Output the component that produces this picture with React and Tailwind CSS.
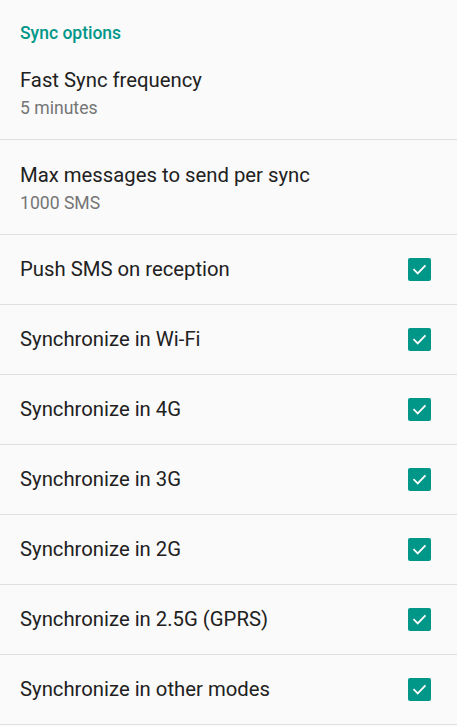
import React from 'react';

const toggles = [
  'Push SMS on reception',
  'Synchronize in Wi-Fi',
  'Synchronize in 4G',
  'Synchronize in 3G',
  'Synchronize in 2G',
  'Synchronize in 2.5G (GPRS)',
  'Synchronize in other modes',
];

const CheckBox = () => (
  <div className="w-[23px] h-[23px] rounded-[2px] bg-[#009688] flex items-center justify-center">
    <svg width="17" height="17" viewBox="0 0 24 24" fill="none">
      <path d="M4.5 12.5l5 5L19.5 7" stroke="#fff" strokeWidth="2.6" strokeLinecap="square" />
    </svg>
  </div>
);

const TwoLine = ({ title, summary }) => (
  <div className="pl-5 pr-5 pt-[22px] pb-[20px]">
    <div className="text-[20.3px] leading-[26px] text-[#212121]">{title}</div>
    <div className="mt-[4px] text-[17.6px] leading-[22px] text-[#757575]">{summary}</div>
  </div>
);

export default function App() {
  return (
    <div className="w-[457px] h-[726px] overflow-hidden bg-[#fafafa] font-['Roboto',sans-serif]">
      <div className="pl-5 pt-[22px] h-[45px] text-[17.5px] leading-[22px] font-medium text-[#009688]">
        Sync options
      </div>
      <TwoLine title="Fast Sync frequency" summary="5 minutes" />
      <div className="h-px bg-[#e0e0e0]" />
      <TwoLine title="Max messages to send per sync" summary="1000 SMS" />
      <div className="h-px bg-[#e0e0e0]" />
      {toggles.map((label) => (
        <div key={label}>
          <div className="h-[69px] flex items-center justify-between pl-5 pr-[26px]">
            <span className="text-[20.3px] text-[#212121]">{label}</span>
            <CheckBox />
          </div>
          <div className="h-px bg-[#e0e0e0]" />
        </div>
      ))}
    </div>
  );
}
